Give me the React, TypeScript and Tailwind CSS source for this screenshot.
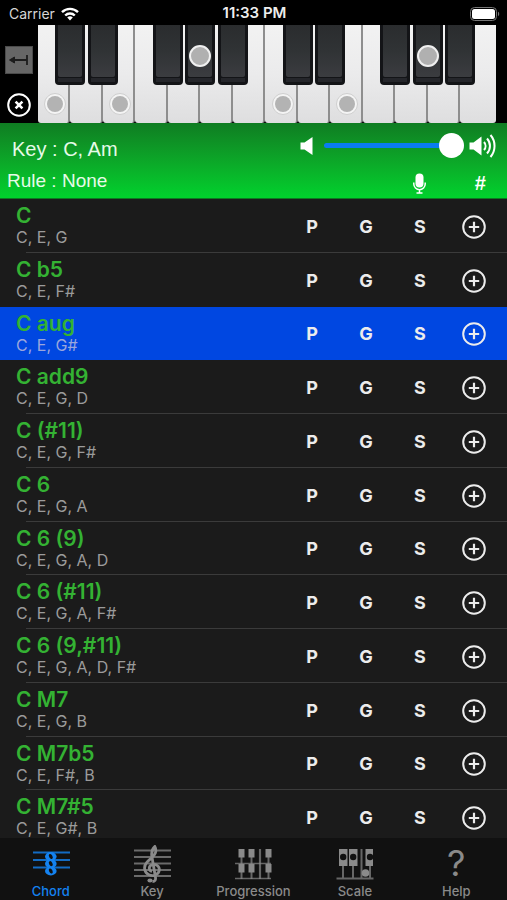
import React, { useState } from "react";
import clsx from "clsx";

interface Chord {
  name: string;
  notes: string[];
}

interface PianoKey {
  note: string;
  sharp?: string;
}

const CHORDS: Chord[] = [
  { name: "C", notes: ["C", "E", "G"] },
  { name: "C b5", notes: ["C", "E", "F#"] },
  { name: "C aug", notes: ["C", "E", "G#"] },
  { name: "C add9", notes: ["C", "E", "G", "D"] },
  { name: "C (#11)", notes: ["C", "E", "G", "F#"] },
  { name: "C 6", notes: ["C", "E", "G", "A"] },
  { name: "C 6 (9)", notes: ["C", "E", "G", "A", "D"] },
  { name: "C 6 (#11)", notes: ["C", "E", "G", "A", "F#"] },
  { name: "C 6 (9,#11)", notes: ["C", "E", "G", "A", "D", "F#"] },
  { name: "C M7", notes: ["C", "E", "G", "B"] },
  { name: "C M7b5", notes: ["C", "E", "F#", "B"] },
  { name: "C M7#5", notes: ["C", "E", "G#", "B"] },
];

const OCTAVE: PianoKey[] = [
  { note: "C", sharp: "C#" },
  { note: "D", sharp: "D#" },
  { note: "E" },
  { note: "F", sharp: "F#" },
  { note: "G", sharp: "G#" },
  { note: "A", sharp: "A#" },
  { note: "B" },
];

const KEYS = [...OCTAVE, ...OCTAVE];

function StatusBar() {
  return (
    <div className="grid h-[25px] grid-cols-3 items-center pt-[2px] pr-[7px] pl-[9px] text-[14px]">
      <div className="flex items-center gap-[6px] text-[#d6d6d6]">
        <span>Carrier</span>
        <svg width="18" height="14" viewBox="0 0 18 14" fill="none" stroke="#fff" strokeWidth="2.4">
          <path d="M1 5.2a11.4 11.4 0 0 1 16 0" />
          <path d="M4.2 8.5a6.8 6.8 0 0 1 9.6 0" />
          <path d="M9 13.4 6.2 10.5a4 4 0 0 1 5.6 0Z" fill="#fff" stroke="none" />
        </svg>
      </div>
      <span className="text-center text-[15px] font-semibold text-[#eee]">11:33 PM</span>
      <svg className="justify-self-end" width="30" height="14" viewBox="0 0 30 14">
        <rect x="0.5" y="0.5" width="26" height="13" rx="4" fill="none" stroke="#777" />
        <rect x="2" y="2" width="23" height="10" rx="2.5" fill="#fff" />
        <path d="M28 4.8c1.6.6 1.6 3.8 0 4.4Z" fill="#777" />
      </svg>
    </div>
  );
}

/** Two octaves of keys, with a dot on every note of the playing chord */
function Piano({ active }: { active: string[] }) {
  return (
    <div className="flex h-[98px]">
      <div className="flex w-[38px] flex-col items-center justify-between pt-[21px] pb-[6px]">
        <button
          aria-label="Sustain"
          className="flex h-[28px] w-[28px] items-center justify-center border border-[#4a4a4a] bg-[#666]"
        >
          <svg width="20" height="12" viewBox="0 0 20 12" stroke="#1c1c1c" fill="#1c1c1c">
            <path d="M4 6h13.5M18 1v10" strokeWidth="1.8" />
            <path d="M0.500 6l5-3v6Z" />
          </svg>
        </button>
        <button aria-label="Clear">
          <svg width="24" height="24" viewBox="0 0 24 24" fill="none" stroke="#fff">
            <circle cx="12" cy="12" r="10.8" strokeWidth="2" />
            <path d="M8.6 8.6l6.8 6.8M15.4 8.6l-6.8 6.8" strokeWidth="2.6" />
          </svg>
        </button>
      </div>
      <div className="flex flex-1">
        {KEYS.map((key, index) => (
          <div
            key={index}
            className={clsx(
              "relative flex items-end justify-center rounded-b-[3px] bg-linear-to-b from-[#f2f2f2] via-[#ebebec] to-[#dededf] pb-[8px] pl-[4px]",
              index < KEYS.length - 1 ? "flex-1 border-r-2 border-[#8e8e8e]" : "w-[36px] flex-none"
            )}
          >
            {active.includes(key.note) && (
              <span className="h-[22px] w-[22px] flex-none rounded-full border border-[#cfcfcf] bg-[#f4f4f4] p-[2px]">
                <span className="block h-full w-full rounded-full bg-[#b3b3b3]" />
              </span>
            )}
            {key.sharp && (
              <div className="absolute top-0 left-full z-10 ml-[2px] flex h-[60px] w-[30px] -translate-x-1/2 flex-col rounded-b-[4px] bg-[#131417] px-[3px] pb-[3px]">
                <div className="flex-1 rounded-b-[2px] bg-linear-to-b from-[#2a2c2e] via-[#303335] to-[#3b3c40]" />
                <div className="mt-px h-[4px] bg-[#25262b]" />
                {active.includes(key.sharp) && (
                  <span className="absolute top-[20px] left-1/2 h-[22px] w-[22px] -translate-x-1/2 rounded-full border-2 border-[#f0f0f0] bg-[#b0b0b0]" />
                )}
              </div>
            )}
          </div>
        ))}
      </div>
      <div className="w-[11px]" />
    </div>
  );
}

function KeyPanel() {
  const [volume, setVolume] = useState(100);

  return (
    <div
      className="flex h-[76px] flex-col border-b border-[#0b7a20] bg-linear-to-b from-[#0f7d22] to-[#00d22d] text-[#e6fbe8]"
      style={{ fontFamily: '"Liberation Sans", Arial, sans-serif' }}
    >
      <div className="flex h-[48px] items-center pt-[4px] pr-[10px] pl-[12px]">
        <button className="pt-[6px] text-[20px]">Key : C, Am</button>
        <div className="ml-auto flex items-center">
          <svg width="13" height="18" viewBox="0 0 13 18" fill="#fff">
            <path d="M0.500 5.500h4L12.500 0v18L4.500 12.500h-4Z" />
          </svg>
          <input
            type="range"
            aria-label="Volume"
            min={0}
            max={100}
            value={volume}
            onChange={(e) => setVolume(Number(e.target.value))}
            className="mr-[5px] ml-[11px] h-[5px] w-[140px] appearance-none rounded-full bg-[#0a7cf0] [&::-webkit-slider-thumb]:h-[25px] [&::-webkit-slider-thumb]:w-[25px] [&::-webkit-slider-thumb]:appearance-none [&::-webkit-slider-thumb]:rounded-full [&::-webkit-slider-thumb]:bg-white"
          />
          <svg width="28" height="24" viewBox="0 0 28 24" fill="none" stroke="#fff" strokeWidth="2">
            <path d="M0.500 8.500h4L12.500 2.500v19L4.500 15.500h-4Z" fill="#fff" stroke="none" />
            <path d="M15 8a6 6 0 0 1 0 8" />
            <path d="M18 4.500a11 11 0 0 1 0 15" />
            <path d="M21.500 1a17 17 0 0 1 0 22" />
          </svg>
        </div>
      </div>
      <div className="flex flex-1 items-center pl-[7px]">
        <button className="text-[19px]">Rule : None</button>
        <button aria-label="Microphone" className="ml-auto flex w-[54px] justify-center pt-[4px]">
          <svg width="13" height="21" viewBox="0 0 13 21" fill="none" stroke="#fff" strokeWidth="1.500">
            <rect x="2.500" y="0.500" width="8" height="14" rx="4" fill="#fff" stroke="none" />
            <path d="M0.800 9.500v1.500a5.700 5.700 0 0 0 11.400 0V9.500M6.500 17v2.500M3.500 20h6" />
          </svg>
        </button>
        <button className="ml-[7px] w-[54px] pt-[4px] text-center text-[20px] font-bold text-white italic">#</button>
      </div>
    </div>
  );
}

interface ChordRowProps {
  chord: Chord;
  selected: boolean;
  divider: boolean;
  onSelect: () => void;
}

function ChordRow({ chord, selected, divider, onSelect }: ChordRowProps) {
  return (
    <li className={clsx("relative flex items-center pr-[6px] pl-[16px]", selected && "bg-[#0047e1]")}>
      <button onClick={onSelect} className="flex-1 self-start pt-[5px] text-left">
        <span className="block text-[21px] leading-[24px] font-semibold text-[#34b233]">{chord.name}</span>
        <span className={clsx("block text-[16px] leading-[18px]", selected ? "text-[#9aa6dc]" : "text-[#9b9b9b]")}>
          {chord.notes.join(", ")}
        </span>
      </button>
      {["P", "G", "S"].map((label) => (
        <button key={label} className="w-[54px] pt-px text-center text-[18px] font-bold text-[#ececec]">
          {label}
        </button>
      ))}
      <button aria-label={`Add ${chord.name}`} className="flex w-[54px] justify-center pt-[2px]">
        <svg width="24" height="24" viewBox="0 0 24 24" fill="none" stroke="#ececec">
          <circle cx="12" cy="12" r="10.800" strokeWidth="2" />
          <path d="M12 6.800v10.400M6.800 12h10.400" strokeWidth="2.200" />
        </svg>
      </button>
      {divider && <span className="absolute right-0 bottom-0 left-[26px] h-px bg-[#3b3b3b]" />}
    </li>
  );
}

function ChordIcon() {
  return (
    <svg width="38" height="36" viewBox="0 0 38 36" fill="none" stroke="currentColor">
      <path d="M1 7.500h37M1 15h37M1 22.500h37" strokeWidth="2" opacity="0.800" />
      {[11.500, 18.700, 26].map((y) => (
        <g key={y}>
          <ellipse cx="18.800" cy={y} rx="5.800" ry="4.400" fill="currentColor" stroke="none" />
          <ellipse cx="18.800" cy={y} rx="1.700" ry="2.700" fill="#111" stroke="none" transform={`rotate(-28 18.800 ${y})`} />
        </g>
      ))}
    </svg>
  );
}

function KeyIcon() {
  return (
    <svg width="38" height="38" viewBox="0 0 38 38" fill="none" stroke="currentColor">
      <path d="M1 5.500h37M1 12h37M1 18.500h37M1 25h37M1 31h37" strokeWidth="1.800" opacity="0.750" />
      <path
        d="M19 26.500c-3.200-.8-3.800-5-.5-6.500 3.800-1.600 8.200.8 7.800 5.200-.5 4.300-5.700 6.300-9.800 4.800-5.700-2.200-6.200-8.700-2.700-12.700 3-3.500 8.500-6.300 9-11 .1-2-.2-3.500-1-4.800-2.700 2.500-3.500 6-3 9.500l3.700 21.500c.4 2.500-.7 4-3 4"
        strokeWidth="2.800"
      />
      <ellipse cx="17" cy="35.500" rx="2.600" ry="1.900" fill="currentColor" stroke="none" />
    </svg>
  );
}

function ProgressionIcon() {
  return (
    <svg width="38" height="36" viewBox="0 0 38 36" fill="none" stroke="currentColor">
      <path d="M1 18.500h36M1 33.500h36" strokeWidth="1.500" opacity="0.700" />
      <path d="M26 4v30" strokeWidth="2.200" opacity="0.700" />
      {[7.500, 17.500, 34.500].map((x) => (
        <g key={x}>
          <path d={`M${x} 4v30`} strokeWidth="2" opacity="0.700" />
          <path d={`M${x} 4v8.500M${x} 19v8.500`} strokeWidth="6" />
        </g>
      ))}
    </svg>
  );
}

function ScaleIcon() {
  return (
    <svg width="38" height="36" viewBox="0 0 38 36" fill="none" stroke="currentColor">
      <path d="M0.500 33.500h37M7 21v13M17 21v13M34 21v13M25.500 4v30" strokeWidth="2" opacity="0.700" />
      <path d="M3 4h8.500v17H3ZM13 4h8.500v17H13ZM29.500 4H37v17h-7.500Z" fill="currentColor" stroke="none" />
      <g fill="#111" stroke="none">
        <circle cx="7.200" cy="12" r="3.200" />
        <circle cx="17.200" cy="12" r="3.200" />
        <circle cx="34" cy="12" r="3.200" />
      </g>
      <circle cx="29.500" cy="28" r="3.800" fill="currentColor" stroke="none" />
    </svg>
  );
}

const TABS = [
  { label: "Chord", icon: <ChordIcon /> },
  { label: "Key", icon: <KeyIcon /> },
  { label: "Progression", icon: <ProgressionIcon /> },
  { label: "Scale", icon: <ScaleIcon /> },
  { label: "Help", icon: <span className="text-[36px] leading-[36px]">?</span> },
];

export default function App() {
  const [selected, setSelected] = useState(2);
  const [tab, setTab] = useState("Chord");

  return (
    <div
      className="flex h-screen flex-col overflow-hidden bg-black text-white"
      style={{ fontFamily: "Inter, sans-serif" }}
    >
      <StatusBar />
      <Piano active={CHORDS[selected].notes} />
      <KeyPanel />

      <div className="min-h-0 flex-1 overflow-y-auto bg-[#1b1b1b] [scrollbar-width:none]">
        <ul className="grid min-h-[645px] auto-rows-fr">
          {CHORDS.map((chord, index) => (
            <ChordRow
              key={chord.name}
              chord={chord}
              selected={index === selected}
              divider={index !== selected && index !== selected - 1}
              onSelect={() => setSelected(index)}
            />
          ))}
        </ul>
      </div>

      <nav className="grid h-[62px] grid-cols-5 bg-[#111]">
        {TABS.map(({ label, icon }) => (
          <button
            key={label}
            onClick={() => setTab(label)}
            className={clsx(
              "flex flex-col items-center pt-[7px]",
              tab === label ? "text-[#1482f0]" : "text-[#8a8a8a]"
            )}
          >
            <span className="flex h-[38px] items-start justify-center">{icon}</span>
            <span className="text-[13px] leading-[16px] font-medium">{label}</span>
          </button>
        ))}
      </nav>
    </div>
  );
}
